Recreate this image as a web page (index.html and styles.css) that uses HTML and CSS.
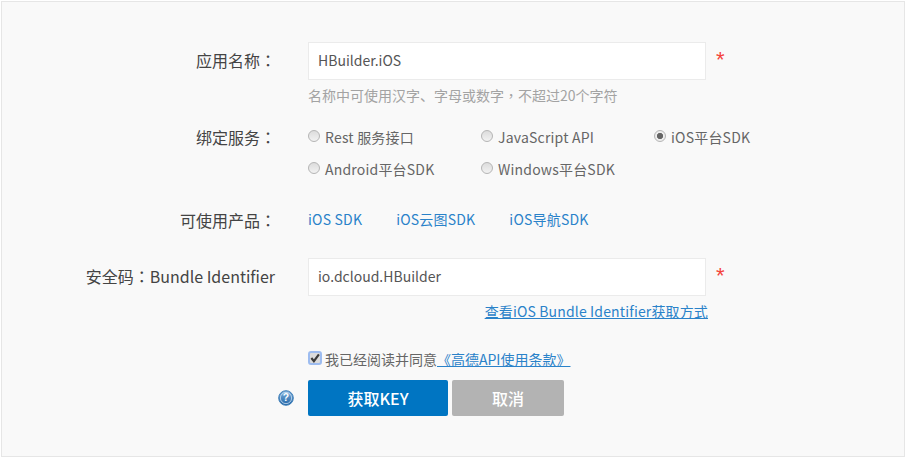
FILE: index.html
```html
<!DOCTYPE html>
<html lang="zh-CN">
<head>
<meta charset="utf-8">
<title>获取KEY</title>
<link rel="stylesheet" href="styles.css">
</head>
<body>
<form class="panel">
  <div class="row row-name">
    <label class="label">应用名称<span class="colon" lang="zh-TW">：</span></label>
    <div class="field">
      <div class="input-line">
        <div class="input">HBuilder.iOS</div>
        <span class="star">*</span>
      </div>
      <p class="hint">名称中可使用汉字、字母或数字<span class="colon" lang="zh-TW">，</span>不超过20个字符</p>
    </div>
  </div>

  <div class="row row-service">
    <label class="label label-tight">绑定服务<span class="colon" lang="zh-TW">：</span></label>
    <div class="radios">
      <span class="radio-item"><i class="radio"></i>Rest 服务接口</span>
      <span class="radio-item"><i class="radio"></i>JavaScript API</span>
      <span class="radio-item"><i class="radio checked"></i>iOS平台SDK</span>
      <span class="radio-item"><i class="radio"></i>Android平台SDK</span>
      <span class="radio-item"><i class="radio"></i>Windows平台SDK</span>
    </div>
  </div>

  <div class="row row-products">
    <label class="label label-tight">可使用产品<span class="colon" lang="zh-TW">：</span></label>
    <div class="products">
      <a class="product">iOS SDK</a>
      <a class="product">iOS云图SDK</a>
      <a class="product">iOS导航SDK</a>
    </div>
  </div>

  <div class="row row-code">
    <label class="label label-wide">安全码<span class="colon" lang="zh-TW">：</span>Bundle Identifier</label>
    <div class="field">
      <div class="input-line">
        <div class="input">io.dcloud.HBuilder</div>
        <span class="star">*</span>
      </div>
      <a class="how">查看iOS Bundle Identifier获取方式</a>
    </div>
  </div>

  <div class="row row-agree">
    <div class="label"></div>
    <div class="agree">
      <span class="check"><svg width="10" height="10" viewBox="0 0 11 11"><path d="M1.5 5.5 L4.3 9 L9.8 1.6" fill="none" stroke="#3c3c3c" stroke-width="2.4"/></svg></span>
      <span>我已经阅读并同意</span><a class="terms">《高德API使用条款》</a>
    </div>
  </div>

  <div class="row row-actions">
    <div class="label help-cell">
      <svg class="help" width="16" height="16" viewBox="0 0 17 17"><defs><linearGradient id="g" x1="0" y1="0" x2="0" y2="1"><stop offset="0" stop-color="#7fb0dc"/><stop offset="1" stop-color="#1f63a6"/></linearGradient></defs><circle cx="8.5" cy="8.5" r="7.8" fill="url(#g)" stroke="#3f7fb8"/><circle cx="8.5" cy="8.5" r="6" fill="none" stroke="#d5e6f5" stroke-width=".8"/><text x="8.5" y="12.2" text-anchor="middle" class="help-mark">?</text></svg>
    </div>
    <div class="actions">
      <button type="button" class="btn btn-primary">获取KEY</button>
      <button type="button" class="btn btn-muted">取消</button>
    </div>
  </div>
</form>
</body>
</html>
```
FILE: styles.css
```css
* { box-sizing: border-box; }
html, body { margin: 0; padding: 0; background: #fff; }
body {
  width: 906px;
  height: 458px;
  padding: 1px 1px 0 1px;
  font-family: "Noto Sans CJK SC", "Noto Sans", sans-serif;
  overflow: hidden;
}
.panel {
  width: 904px;
  height: 456px;
  background: #f9f9f9;
  border: 1px solid #e6e6e6;
  padding-top: 40px;
}
.row { display: flex; align-items: flex-start; }
.colon { font-family: "Noto Sans CJK TC", sans-serif; }
.label {
  flex: 0 0 306px;
  padding-right: 32px;
  text-align: right;
  font-size: 16px;
  line-height: 36px;
  color: #444;
  white-space: nowrap;
}
.label-tight { line-height: 22px; }
.label-wide { padding-right: 33px; }
.input-line { display: flex; align-items: flex-start; }
.input {
  width: 398px;
  height: 38px;
  background: #fff;
  border: 1px solid #ebebeb;
  padding-left: 9px;
  font-size: 14px;
  line-height: 35px;
  color: #555;
}
.star {
  margin-left: 10px;
  font-family: "Liberation Sans", sans-serif;
  font-size: 22px;
  line-height: 36px;
  color: #f4433c;
}
.hint {
  margin: 5px 0 0;
  font-size: 14px;
  line-height: 20px;
  color: #a3a3a3;
}
.row-service { margin-top: 21px; }
.radios {
  display: grid;
  grid-template-columns: 173px 173px auto;
  row-gap: 10px;
}
.radio-item {
  display: flex;
  align-items: center;
  height: 22px;
  font-size: 14px;
  letter-spacing: .2px;
  color: #666;
  white-space: nowrap;
}
.radio {
  width: 12px;
  height: 12px;
  margin-right: 5px;
  margin-top: -3px;
  border-radius: 50%;
  border: 1px solid #b5b5b5;
  background: linear-gradient(#dcdcdc, #f2f2f2);
  display: block;
  flex: none;
}
.radio.checked {
  background: radial-gradient(circle, #666 0 2.8px, #eee 3.4px);
}
.row-products { margin-top: 29px; }
.products { display: flex; gap: 34px; }
.product {
  font-size: 14px;
  letter-spacing: .2px;
  line-height: 20px;
  color: #2a82c9;
}
.row-code { margin-top: 27px; }
.how {
  display: block;
  width: 400px;
  margin-top: 5px;
  text-align: right;
  font-size: 14px;
  letter-spacing: .15px;
  line-height: 20px;
  color: #2a82c9;
  text-decoration: underline;
}
.row-agree { margin-top: 28px; }
.row-agree .label { line-height: 20px; }
.agree {
  display: flex;
  align-items: center;
  height: 20px;
  font-size: 14px;
  color: #666;
  white-space: nowrap;
}
.check {
  display: flex;
  align-items: center;
  justify-content: center;
  width: 14px;
  height: 14px;
  margin-right: 3px;
  margin-top: -2px;
  border: 2px solid #9dbcf0;
  border-radius: 3px;
  background: #dcdcdc;
}
.terms { color: #2a82c9; text-decoration: underline; }
.row-actions { margin-top: 11px; }
.help-cell {
  height: 36px;
  padding-right: 14px;
  display: flex;
  justify-content: flex-end;
  align-items: center;
}
.help-mark { font-size: 11px; font-weight: 700; fill: #fff; font-family: "Liberation Sans", sans-serif; }
.actions { display: flex; gap: 4px; }
.btn {
  height: 36px;
  border: 0;
  border-radius: 2px;
  padding: 0;
  font-family: inherit;
  font-size: 16px;
  font-weight: 500;
  color: #fff;
}
.btn-primary { width: 140px; background: #0075c2; }
.btn-muted { width: 112px; background: #b3b3b3; }
```
